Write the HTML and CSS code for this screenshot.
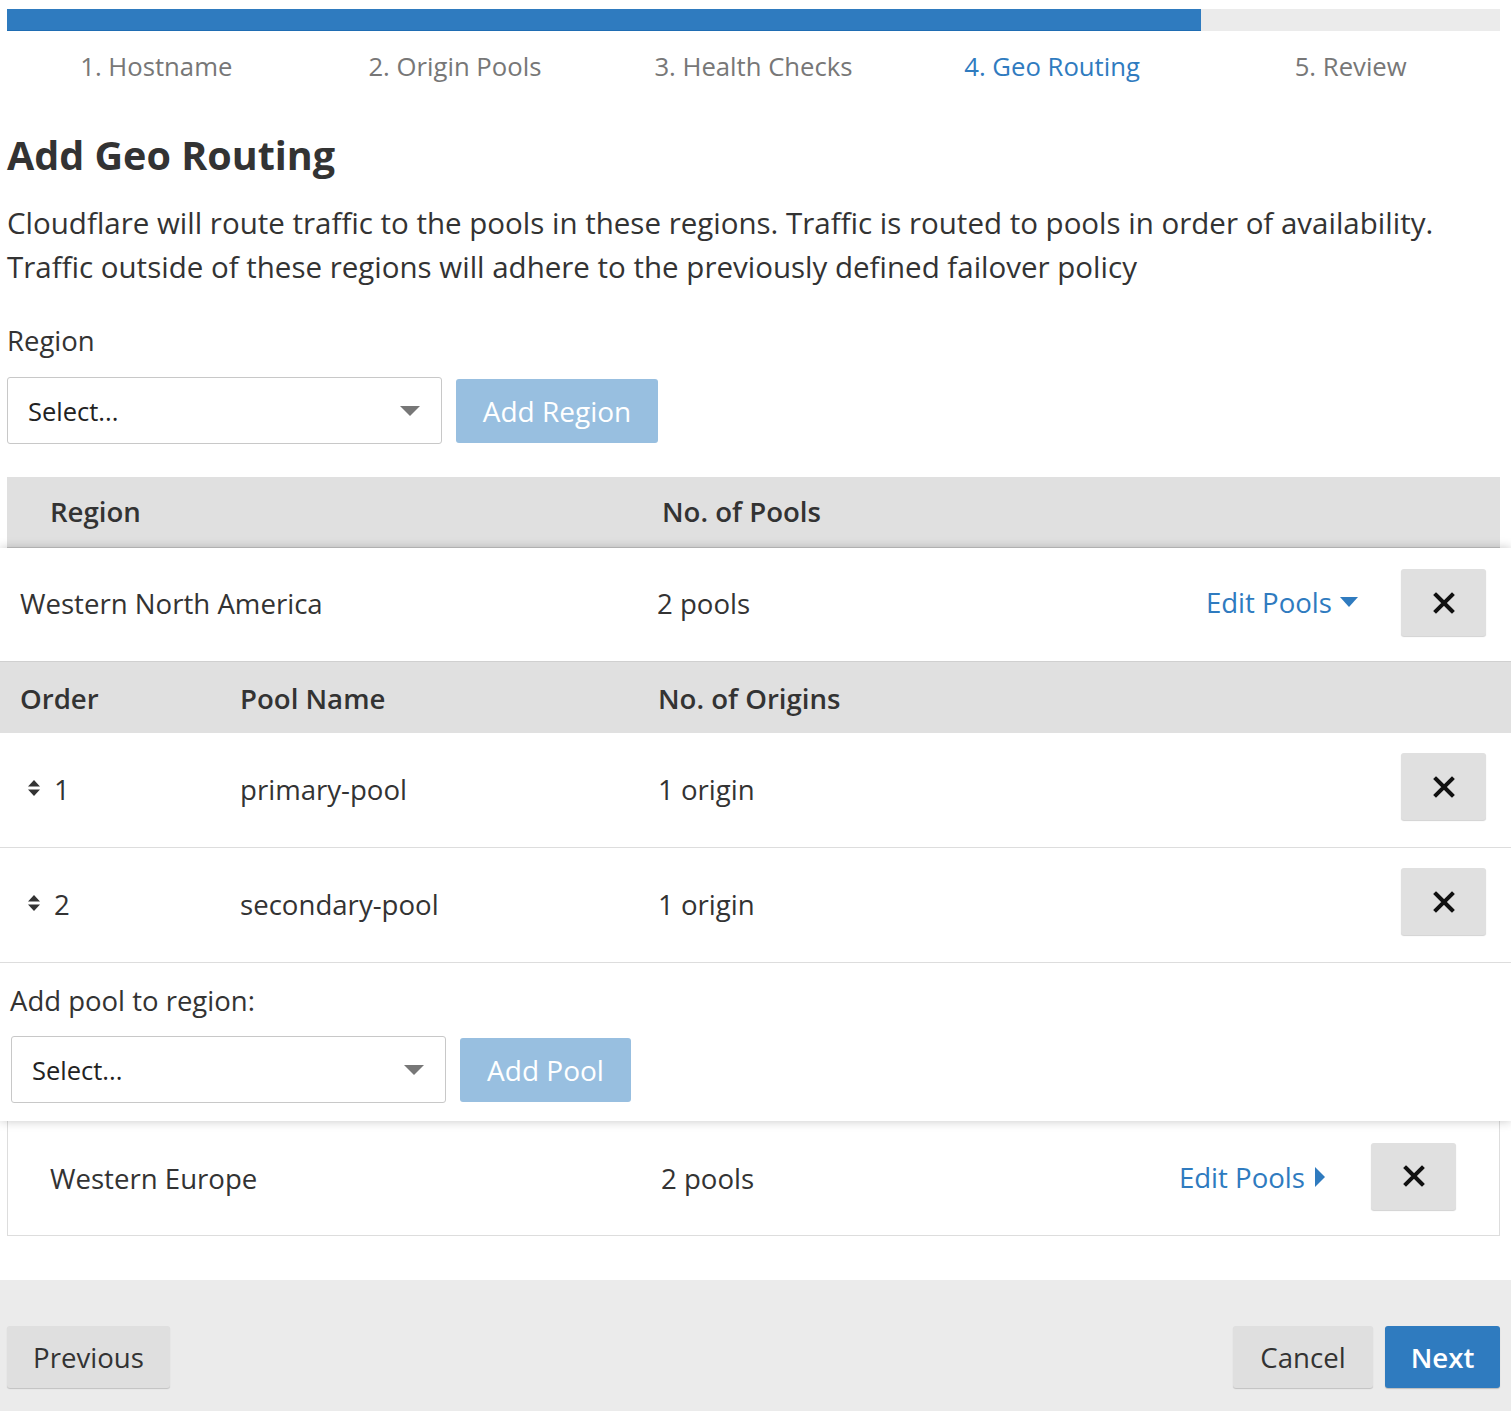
FILE: index.html
```html
<!DOCTYPE html>
<html>
<head>
<meta charset="utf-8">
<link rel="stylesheet" href="styles.css">
</head>
<body>
<div class="wizard">
  <div class="top">
    <div class="progress"><div class="progress-fill" style="width:80%"></div></div>
    <ol class="steps">
      <li>1. Hostname</li>
      <li>2. Origin Pools</li>
      <li>3. Health Checks</li>
      <li class="active">4. Geo Routing</li>
      <li>5. Review</li>
    </ol>
    <h1 class="title">Add Geo Routing</h1>
    <p class="desc">Cloudflare will route traffic to the pools in these regions. Traffic is routed to pools in order of availability. Traffic outside of these regions will adhere to the previously defined failover policy</p>
    <div class="field-label">Region</div>
    <div class="picker">
      <div class="select"><span>Select...</span><span class="caret"></span></div>
      <button class="btn btn-light-blue btn-region">Add Region</button>
    </div>
    <div class="region-table">
      <div class="thead">
        <span>Region</span>
        <span>No. of Pools</span>
      </div>
      <div class="region-card">
        <div class="region-row">
          <span>Western North America</span>
          <span>2 pools</span>
          <a class="edit-link">Edit Pools <span class="tri-down"></span></a>
          <button class="btn-x"><svg width="22" height="22" viewBox="0 0 22 22"><path d="M3 3 L19 19 M19 3 L3 19" stroke="#111" stroke-width="4" stroke-linecap="square"/></svg></button>
        </div>
        <div class="pool-head">
          <span>Order</span>
          <span>Pool Name</span>
          <span>No. of Origins</span>
        </div>
        <div class="pool-row">
          <span class="order"><svg class="sort" width="14" height="18" viewBox="0 0 14 18"><path d="M7 1 L13 7.5 L1 7.5 Z M1 10.5 L13 10.5 L7 17 Z" fill="#333"/></svg>1</span>
          <span>primary-pool</span>
          <span>1 origin</span>
          <button class="btn-x"><svg width="22" height="22" viewBox="0 0 22 22"><path d="M3 3 L19 19 M19 3 L3 19" stroke="#111" stroke-width="4" stroke-linecap="square"/></svg></button>
        </div>
        <div class="pool-row">
          <span class="order"><svg class="sort" width="14" height="18" viewBox="0 0 14 18"><path d="M7 1 L13 7.5 L1 7.5 Z M1 10.5 L13 10.5 L7 17 Z" fill="#333"/></svg>2</span>
          <span>secondary-pool</span>
          <span>1 origin</span>
          <button class="btn-x"><svg width="22" height="22" viewBox="0 0 22 22"><path d="M3 3 L19 19 M19 3 L3 19" stroke="#111" stroke-width="4" stroke-linecap="square"/></svg></button>
        </div>
        <div class="add-pool">
          <div class="field-label small">Add pool to region:</div>
          <div class="picker">
            <div class="select"><span>Select...</span><span class="caret"></span></div>
            <button class="btn btn-light-blue btn-pool">Add Pool</button>
          </div>
        </div>
      </div>
      <div class="region-collapsed">
        <span>Western Europe</span>
        <span>2 pools</span>
        <a class="edit-link">Edit Pools <span class="tri-right"></span></a>
        <button class="btn-x"><svg width="22" height="22" viewBox="0 0 22 22"><path d="M3 3 L19 19 M19 3 L3 19" stroke="#111" stroke-width="4" stroke-linecap="square"/></svg></button>
      </div>
    </div>
  </div>
  <div class="footer">
    <button class="btn btn-gray btn-prev">Previous</button>
    <div class="footer-right">
      <button class="btn btn-gray btn-cancel">Cancel</button>
      <button class="btn btn-blue btn-next">Next</button>
    </div>
  </div>
</div>
</body>
</html>
```

FILE: styles.css
```css
* { box-sizing: border-box; }
html, body { margin: 0; padding: 0; background: #fff; }
body {
  font-family: "Open Sans", "Noto Sans", sans-serif;
  color: #333;
  width: 1511px;
}
.top { padding: 9px 11px 0 7px; }
.progress {
  height: 22px;
  background: #ebebeb;
}
.progress-fill {
  height: 100%;
  background: #2f7bbf;
  border-bottom: 1px solid #1f6db3;
}
.steps {
  list-style: none;
  margin: 0;
  padding: 0;
  display: grid;
  grid-template-columns: repeat(5, 1fr);
  height: 72px;
  align-items: center;
}
.steps li {
  text-align: center;
  font-size: 25.7px;
  color: #777;
  padding-bottom: 2px;
}
.steps li.active { color: #2f7bbf; }
.title {
  margin: 12px 0 0;
  font-size: 39.5px;
  font-weight: 700;
  line-height: 80px;
  height: 80px;
  color: #333;
}
.desc {
  margin: 6px 0 0;
  font-size: 29.5px;
  line-height: 44px;
  color: #333;
}
.field-label {
  font-size: 27.5px;
  line-height: 40px;
  margin-top: 32px;
}
.picker {
  display: flex;
  align-items: center;
  gap: 14px;
  margin-top: 16px;
}
.select {
  width: 435px;
  height: 67px;
  border: 1px solid #c8c8c8;
  border-radius: 3px;
  background: #fff;
  display: flex;
  align-items: center;
  justify-content: space-between;
  padding: 0 21px 0 20px;
  font-size: 25.5px;
  color: #222;
}
.caret {
  width: 0; height: 0;
  border-left: 10px solid transparent;
  border-right: 10px solid transparent;
  border-top: 10px solid #777;
}
.btn {
  font-family: inherit;
  border: none;
  border-radius: 3px;
  cursor: pointer;
  font-size: 27.6px;
}
.btn-light-blue {
  background: #98bfe0;
  color: #fff;
  height: 64px;
  font-size: 28px;
}
.btn-region { width: 202px; }
.btn-pool { width: 171px; }
.region-table { margin-top: 33px; }
.thead {
  display: grid;
  grid-template-columns: 612px 1fr;
  align-items: center;
  height: 71px;
  padding-left: 43px;
  padding-bottom: 3px;
  background: #e0e0e0;
  font-size: 27.6px;
  font-weight: 600;
  color: #333;
  border-bottom: 1px solid #c4c4c4;
}
.region-card {
  margin: 0 -11px 0 -7px;
  background: #fff;
  box-shadow: 0 0 10px rgba(0,0,0,0.22);
  position: relative;
  z-index: 1;
}
.region-row {
  display: grid;
  grid-template-columns: 637px 1fr auto auto;
  align-items: center;
  height: 113px;
  padding: 0 25px 4px 20px;
  font-size: 27.6px;
}
.region-row .btn-x { margin-top: 0; }
.edit-link {
  color: #2f7bbf;
  font-size: 27.6px;
  display: flex;
  align-items: center;
  gap: 8px;
  margin-right: 43px;
  margin-top: -2px;
}
.tri-down {
  width: 0; height: 0;
  border-left: 9px solid transparent;
  border-right: 9px solid transparent;
  border-top: 10px solid #2f7bbf;
}
.tri-right {
  width: 0; height: 0;
  border-top: 10px solid transparent;
  border-bottom: 10px solid transparent;
  border-left: 10px solid #2f7bbf;
  margin-left: 2px;
}
.btn-x {
  width: 85px;
  height: 67px;
  border: none;
  border-radius: 3px;
  background: #e0e0e0;
  box-shadow: 0 1px 1px rgba(0,0,0,0.18);
  display: flex;
  align-items: center;
  justify-content: center;
  margin-top: -4px;
  padding: 0;
}
.pool-head {
  display: grid;
  grid-template-columns: 220px 418px 1fr;
  align-items: center;
  height: 72px;
  padding-left: 20px;
  background: #e0e0e0;
  font-size: 27.6px;
  font-weight: 600;
  border-top: 1px solid #d0d0d0;
}
.pool-row {
  display: grid;
  grid-template-columns: 220px 418px 1fr auto;
  align-items: center;
  height: 115px;
  padding: 0 25px 3px 20px;
  font-size: 27.6px;
  border-bottom: 1px solid #ddd;
}
.order {
  display: flex;
  align-items: center;
  gap: 13px;
  padding-left: 7px;
}
.sort { margin-top: -2px; }
.add-pool {
  padding: 0 0 18px 11px;
}
.field-label.small {
  margin-top: 0;
  padding-top: 18px;
  margin-left: -1px;
}
.add-pool .picker { margin-top: 15px; }
.region-collapsed {
  display: grid;
  grid-template-columns: 611px 1fr auto auto;
  align-items: center;
  height: 115px;
  padding: 0 43px 0 42px;
  border: 1px solid #ddd;
  border-top: none;
  font-size: 27.6px;
}
.region-collapsed .edit-link { margin-right: 46px; }
.footer {
  margin-top: 44px;
  background: #ebebeb;
  height: 160px;
  display: flex;
  align-items: flex-start;
  justify-content: space-between;
  padding: 46px 11px 0 7px;
}
.btn-gray {
  background: #dfdfdf;
  color: #333;
  box-shadow: 0 1px 1px rgba(0,0,0,0.18);
  height: 62px;
}
.btn-blue {
  background: #2f7bbf;
  color: #fff;
  font-weight: 600;
  height: 62px;
  box-shadow: 0 1px 1px rgba(0,0,0,0.2);
}
.btn-prev { width: 163px; }
.footer-right { display: flex; gap: 12px; }
.btn-cancel { width: 140px; }
.btn-next { width: 115px; }
```
